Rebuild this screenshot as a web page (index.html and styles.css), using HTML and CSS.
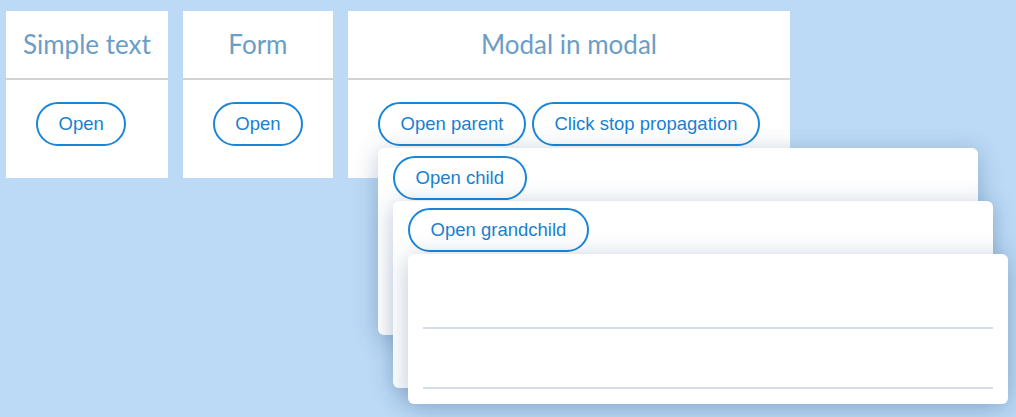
FILE: index.html
```html
<!DOCTYPE html>
<html>
<head>
<meta charset="utf-8">
<link rel="stylesheet" href="styles.css">
</head>
<body>
<div class="page">
  <section class="card">
    <header class="card-head">Simple text</header>
    <div class="card-body">
      <button class="btn">Open</button>
    </div>
  </section>
  <section class="card">
    <header class="card-head">Form</header>
    <div class="card-body">
      <button class="btn">Open</button>
    </div>
  </section>
  <section class="card">
    <header class="card-head">Modal in modal</header>
    <div class="card-body anchor">
      <div class="btn-row">
        <button class="btn">Open parent</button>
        <button class="btn">Click stop propagation</button>
      </div>
      <div class="modal modal-parent">
        <button class="btn">Open child</button>
        <div class="modal modal-child">
          <button class="btn">Open grandchild</button>
          <div class="modal modal-grand">
            <div class="m-head"></div>
            <div class="m-body"></div>
            <div class="m-foot"></div>
          </div>
        </div>
      </div>
    </div>
  </section>
</div>
</body>
</html>
```

FILE: styles.css
```css
* { box-sizing: border-box; }
html, body {
  margin: 0;
  height: 100%;
  background: #bcdaf6;
  overflow: hidden;
}
.page {
  display: flex;
  align-items: flex-start;
  gap: 15px;
  padding: 11px 6px;
}
.card {
  background: #fff;
  display: flex;
  flex-direction: column;
}
.card-head {
  height: 69px;
  padding: 0 17px 2px;
  border-bottom: 2px solid #d3d3d3;
  display: flex;
  align-items: center;
  justify-content: center;
  font-family: "Lato", sans-serif;
  font-size: 26px;
  color: #6b9dc6;
  white-space: nowrap;
}
.card-body {
  padding: 22px 30px 32px;
  display: flex;
}
.anchor { position: relative; }
.btn-row {
  display: flex;
  gap: 6px;
}
.btn {
  height: 44px;
  padding: 0 20.5px;
  border: 2px solid #1a86d6;
  border-radius: 22px;
  background: #fff;
  color: #1a7fd0;
  font-family: "Liberation Sans", Arial, sans-serif;
  font-size: 18.5px;
  white-space: nowrap;
  cursor: pointer;
}
.modal {
  position: absolute;
  width: 600px;
  background: #fff;
  border-radius: 6px;
  box-shadow: 0 4px 24px rgba(30, 70, 120, 0.3);
}
.modal-parent {
  left: 30px;
  top: 68px;
  height: 187px;
  padding: 8px 15px;
}
.modal-child {
  left: 15px;
  top: 53px;
  height: 187px;
  padding: 7px 15px;
}
.modal-grand {
  left: 15px;
  top: 53px;
  height: 150px;
  padding: 0 15px;
}
.m-head {
  height: 75px;
  border-bottom: 2px solid #d3dde8;
}
.m-body {
  height: 60px;
  border-bottom: 2px solid #d3dde8;
}
```
